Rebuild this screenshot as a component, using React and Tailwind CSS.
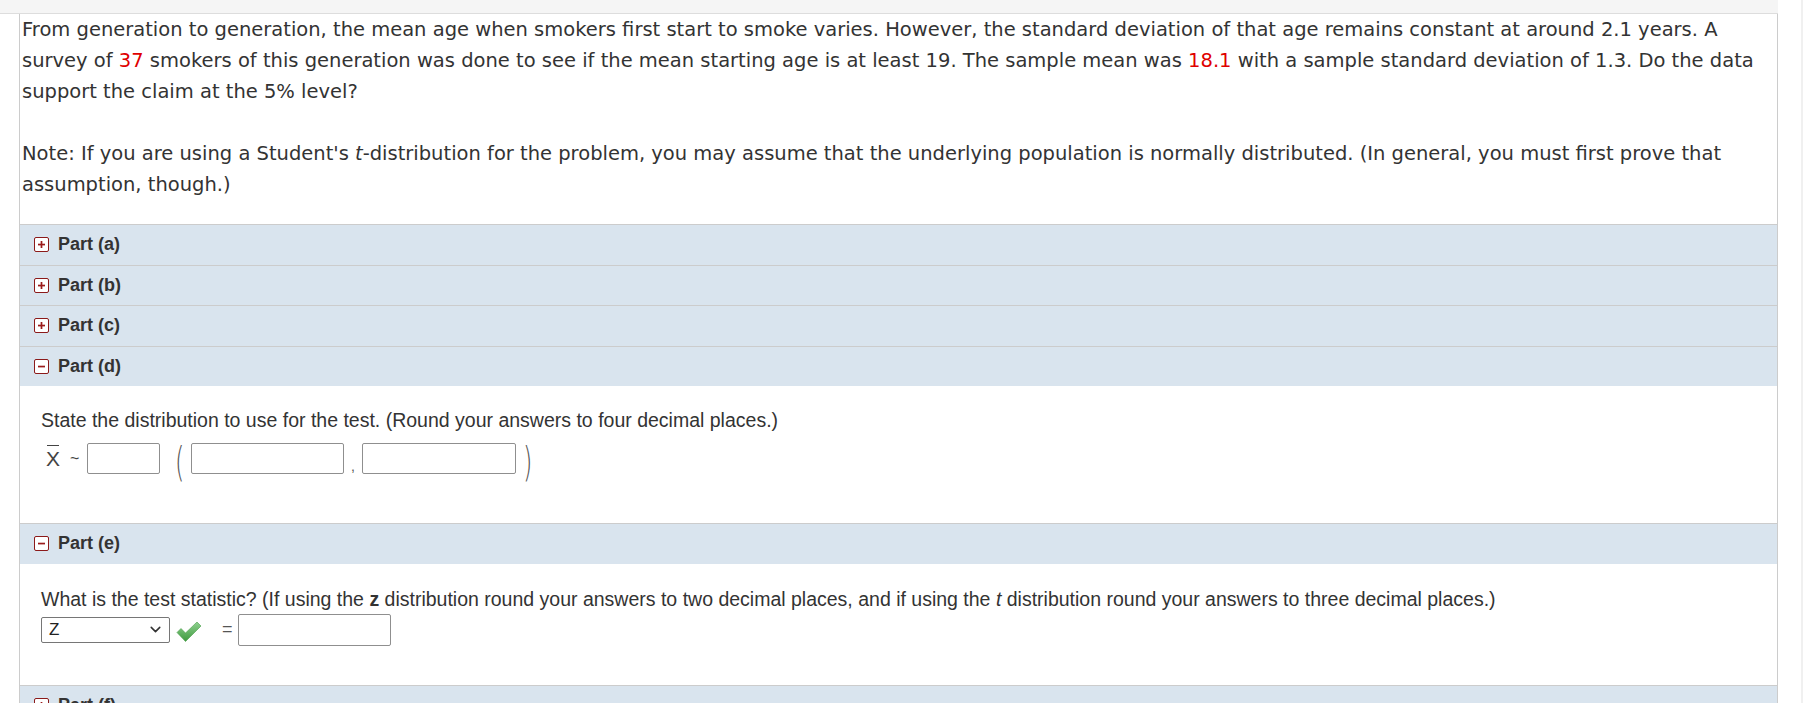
import React from 'react';
import { ChevronDown } from 'lucide-react';

const Box = ({ sign }) => (
  <span className="inline-flex items-center justify-center w-[15px] h-[15px] border-[1.5px] border-[#8b1a1a] rounded-[2px] bg-white mr-[9px]">
    <svg width="9" height="9" viewBox="0 0 9 9">
      <rect x="1" y="3.7" width="7" height="1.7" fill="#9b1c1c" />
      {sign === '+' && <rect x="3.65" y="1" width="1.7" height="7" fill="#9b1c1c" />}
    </svg>
  </span>
);

const PartHeader = ({ label, open }) => (
  <div className="flex items-center h-[40.5px] border-t border-[#cccccc] bg-[#d9e4ee] pl-[14px] font-['Liberation_Sans',Arial,sans-serif] font-bold text-[18px] text-[#333333]">
    <Box sign={open ? '-' : '+'} />
    <span>{label}</span>
  </div>
);

const Field = ({ w }) => (
  <span className={`inline-block h-[31px] border border-[#8f8f8f] rounded-[2px] bg-white ${w}`} />
);

export default function App() {
  return (
    <div className="flex min-h-screen bg-white text-[#333333]">
      <div className="w-[1778px]">
        <div className="h-[14px] bg-[#f5f5f5] border-b border-[#dddddd]" />
        <div className="ml-[19px] border-l border-r border-[#cccccc]">
          <div className="pl-[2px] pb-[24px] font-['DejaVu_Sans',Verdana,sans-serif] text-[19.5px] leading-[31px] text-[#333333]">
            <p>
              From generation to generation, the mean age when smokers first start to smoke varies. However, the standard deviation of that age remains constant at around 2.1 years. A survey of{' '}
              <span className="text-[#e00000]">37</span> smokers of this generation was done to see if the mean starting age is at least 19. The sample mean was{' '}
              <span className="text-[#e00000]">18.1</span> with a sample standard deviation of 1.3. Do the data support the claim at the 5% level?
            </p>
            <p className="mt-[31px]">
              Note: If you are using a Student's <i>t</i>-distribution for the problem, you may assume that the underlying population is normally distributed. (In general, you must first prove that assumption, though.)
            </p>
          </div>

          <PartHeader label="Part (a)" />
          <PartHeader label="Part (b)" />
          <PartHeader label="Part (c)" />
          <PartHeader label="Part (d)" open />

          <div className="pl-[21px] pt-[23px] pb-[49px] font-['Liberation_Sans',Arial,sans-serif] text-[19.5px] text-[#333333]">
            <p className="leading-[22px]">State the distribution to use for the test. (Round your answers to four decimal places.)</p>
            <div className="flex items-center mt-[12px] h-[31px]">
              <span className="relative ml-[5px] text-[21px] leading-none text-[#444]">
                <span className="absolute left-[1px] right-[1px] -top-[3px] border-t border-[#444]" />
                X
              </span>
              <span className="ml-[10px] mr-[8px] text-[16px] text-[#444]">~</span>
              <Field w="w-[73px]" />
              <span className="ml-[12px] mr-[3px] text-[40px] leading-none font-light text-[#555] font-['DejaVu_Sans',sans-serif] scale-x-[0.6] mt-[6px]">(</span>
              <Field w="w-[153px]" />
              <span className="mx-[7px] mt-[16px] text-[14px] text-[#555]">,</span>
              <Field w="w-[154px]" />
              <span className="ml-[4px] text-[40px] leading-none font-light text-[#555] font-['DejaVu_Sans',sans-serif] scale-x-[0.6] mt-[6px]">)</span>
            </div>
          </div>

          <PartHeader label="Part (e)" open />

          <div className="pl-[21px] pt-[24px] pb-[39px] font-['Liberation_Sans',Arial,sans-serif] text-[19.5px] text-[#333333]">
            <p className="leading-[22px]">
              What is the test statistic? (If using the <b>z</b> distribution round your answers to two decimal places, and if using the <i>t</i> distribution round your answers to three decimal places.)
            </p>
            <div className="flex items-center mt-[4px] h-[32px]">
              <div className="flex items-center justify-between w-[129px] h-[26px] border border-[#767676] rounded-[2px] pl-[7px] pr-[5px] bg-white text-[17px] text-[#222]">
                <span>Z</span>
                <ChevronDown size={17} strokeWidth={2.2} className="text-[#333]" />
              </div>
              <svg width="26" height="22" viewBox="0 0 26 22" className="ml-[6px] mt-[4px]">
                <defs>
                  <linearGradient id="ok" x1="0" y1="0" x2="0" y2="1">
                    <stop offset="0" stopColor="#8fd18f" />
                    <stop offset="1" stopColor="#3f9a3f" />
                  </linearGradient>
                </defs>
                <path d="M1 11.5 L5 7.5 L9.5 12 L21 1 L25 5 L9.5 20.5 Z" fill="url(#ok)" stroke="#4a9e4a" strokeWidth="0.6" strokeLinejoin="round" />
              </svg>
              <span className="ml-[20px] mr-[5px] text-[18px] text-[#555]">=</span>
              <span className="inline-block w-[153px] h-[32px] border border-[#8f8f8f] rounded-[2px] bg-white" />
            </div>
          </div>

          <PartHeader label="Part (f)" />
          <div className="h-[200px]" />
        </div>
      </div>
      <div className="ml-auto w-[2px] bg-[#f0f0f0]" />
    </div>
  );
}
